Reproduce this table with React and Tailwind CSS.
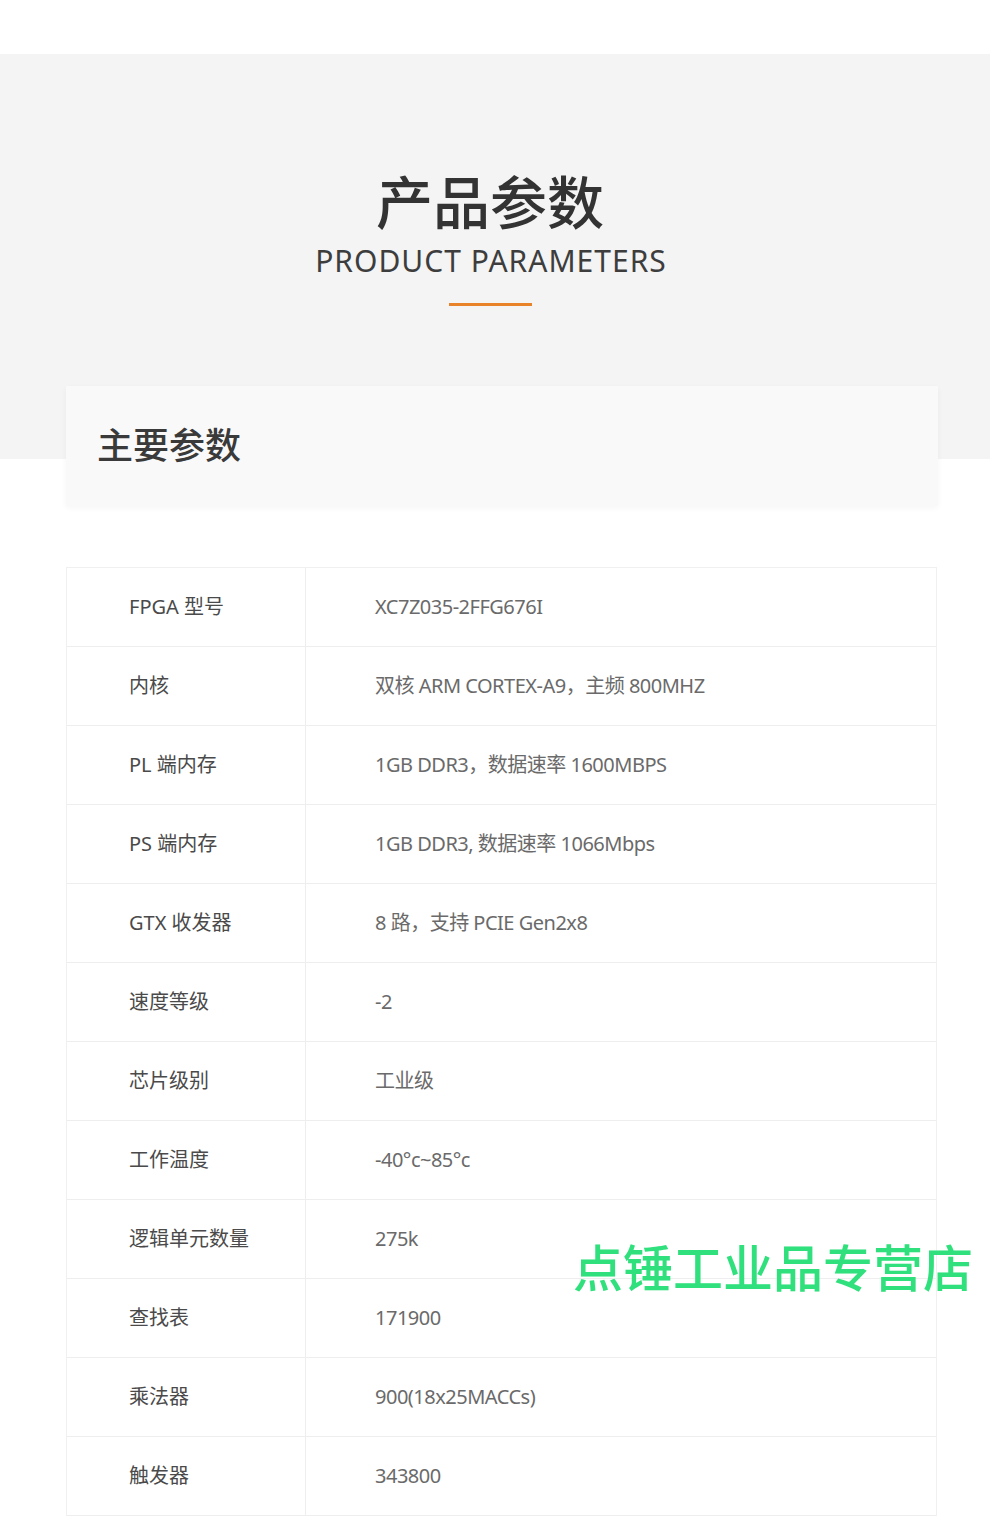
import React from "react";

const rows = [
  ["FPGA 型号", "XC7Z035-2FFG676I"],
  ["内核", "双核 ARM CORTEX-A9，主频 800MHZ"],
  ["PL 端内存", "1GB DDR3，数据速率 1600MBPS"],
  ["PS 端内存", "1GB DDR3, 数据速率 1066Mbps"],
  ["GTX 收发器", "8 路，支持 PCIE Gen2x8"],
  ["速度等级", "-2"],
  ["芯片级别", "工业级"],
  ["工作温度", "-40°c~85°c"],
  ["逻辑单元数量", "275k"],
  ["查找表", "171900"],
  ["乘法器", "900(18x25MACCs)"],
  ["触发器", "343800"],
];

export default function App() {
  return (
    <div
      className="relative w-[990px] h-[1533px] overflow-hidden bg-white"
      style={{ fontFamily: '"Noto Sans", "Noto Sans CJK SC", sans-serif' }}
    >
      <div className="h-[54px] bg-white" />
      <div className="bg-[#f4f4f4] pt-[116px] flex flex-col items-center">
        <h1 className="mr-[10px] text-[57px] leading-[64px] font-medium text-[#333]">产品参数</h1>
        <div className="mr-[8px] mt-[9px] text-[30px] leading-[36px] text-[#3d3d3d] tracking-[1px]">PRODUCT PARAMETERS</div>
        <div className="mr-[9px] mt-[24px] w-[83px] h-[3px] bg-[#e8832a]" />
        <div className="mt-[80px] -mb-[47px] self-stretch ml-[66px] mr-[52px] h-[120px] bg-[#f9f9f9] shadow-[0_2px_6px_rgba(0,0,0,0.04)] flex items-center pl-[31px]">
          <span className="text-[36px] text-[#3a3a3a] font-medium">主要参数</span>
        </div>
      </div>
      <div className="mt-[108px] ml-[66px] mr-[53px] border-l border-r border-t border-[#f0f0f0]">
        {rows.map(([k, v]) => (
          <div key={k} className="flex h-[79px] border-b border-[#eeeeee]">
            <div className="w-[239px] shrink-0 border-r border-[#eeeeee] flex items-center pl-[62px] text-[20px] text-[#4a4a4a]">
              {k}
            </div>
            <div className="flex-1 flex items-center pl-[69px] text-[20px] text-[#6a6a6a] tracking-[-0.5px]">
              {v}
            </div>
          </div>
        ))}
      </div>
      <div className="absolute left-[573px] top-[1236px] text-[50px] leading-[64px] text-[#2fe07c] font-medium whitespace-nowrap">
        点锤工业品专营店
      </div>
    </div>
  );
}
